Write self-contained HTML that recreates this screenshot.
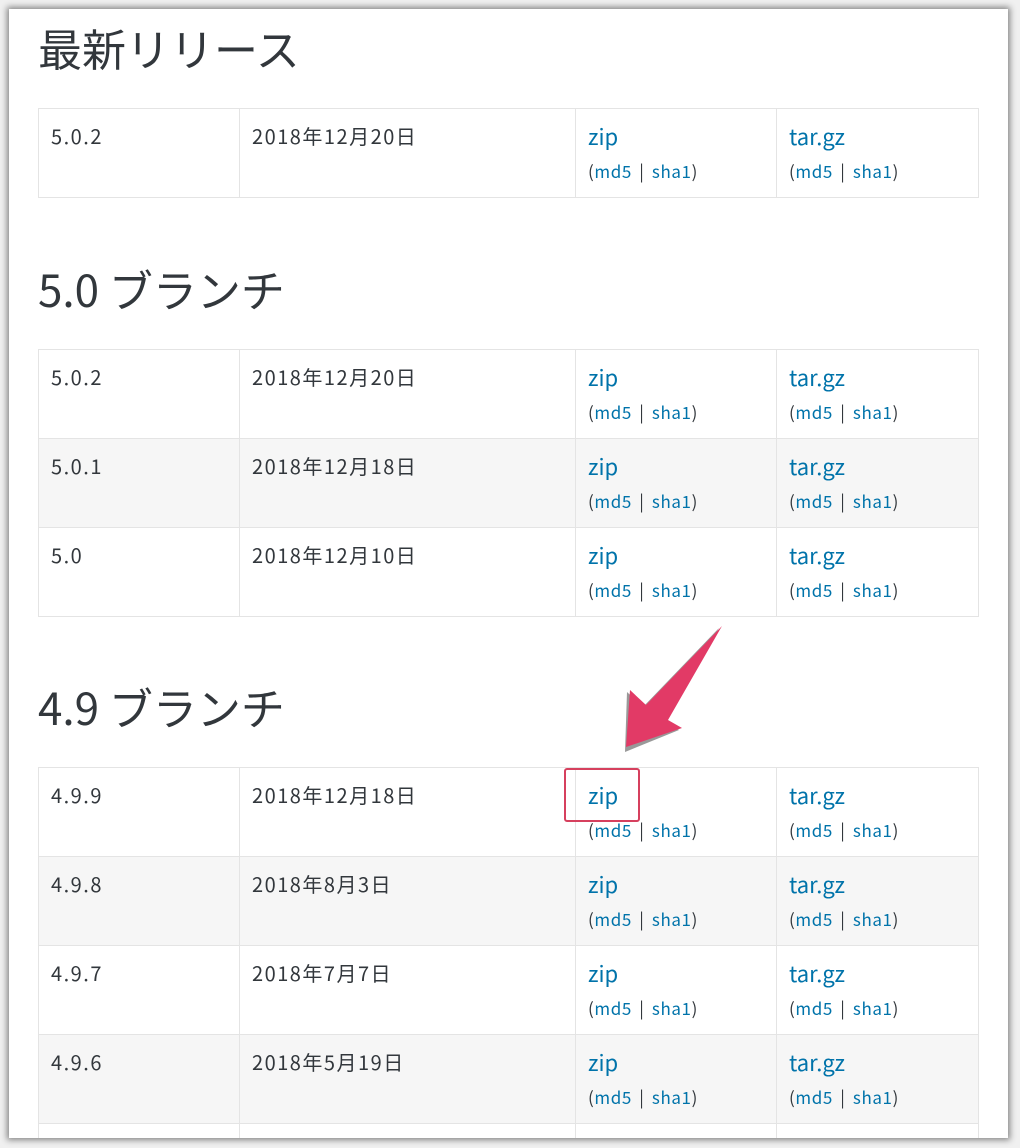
<!DOCTYPE html>
<html><head><meta charset="utf-8"><style>
body{margin:0;width:1020px;height:1148px;background:#f0f0f0;position:relative;overflow:hidden;font-family:"Liberation Sans","Noto Sans CJK JP",sans-serif;}
.panel{position:absolute;left:9px;top:9px;width:999px;height:1129px;background:#fff;box-shadow:0 0 6px 2px rgba(0,0,0,.45);overflow:hidden}
h2{position:absolute;left:29px;margin:0;font-weight:normal;font-size:44px;color:#32373c;line-height:50px;font-family:"Noto Sans CJK JP","Liberation Sans",sans-serif}
table{position:absolute;left:29px;width:941px;border-collapse:collapse;font-family:"Noto Sans CJK JP","Liberation Sans",sans-serif}
td{border:1px solid #e4e4e4;height:89px;vertical-align:top;padding:14px 12px 0;box-sizing:border-box;font-size:20px;letter-spacing:1.5px;color:#32373c;line-height:26px}
td.c3,td.c4{letter-spacing:0}
tr.g td{background:#f6f6f6}
td.c1{width:201px}td.c2{width:336px}td.c3{width:201px}
a{color:#0073aa;text-decoration:none}
.big{font-size:22px;color:#0073aa}
.sm{font-size:17px;display:block;margin-top:8px;letter-spacing:.6px;word-spacing:3px}
</style></head><body>
<div class="panel">
<h2 style="top:13px">最新リリース</h2>
<table style="top:99px"><tr><td class="c1">5.0.2</td><td class="c2">2018年12月20日</td><td class="c3"><span class="big">zip</span><span class="sm">(<a>md5</a> | <a>sha1</a>)</span></td><td class="c4"><span class="big">tar.gz</span><span class="sm">(<a>md5</a> | <a>sha1</a>)</span></td></tr></table>
<h2 style="top:254px">5.0 ブランチ</h2>
<table style="top:340px">
<tr><td class="c1">5.0.2</td><td class="c2">2018年12月20日</td><td class="c3"><span class="big">zip</span><span class="sm">(<a>md5</a> | <a>sha1</a>)</span></td><td class="c4"><span class="big">tar.gz</span><span class="sm">(<a>md5</a> | <a>sha1</a>)</span></td></tr>
<tr class="g"><td class="c1">5.0.1</td><td class="c2">2018年12月18日</td><td class="c3"><span class="big">zip</span><span class="sm">(<a>md5</a> | <a>sha1</a>)</span></td><td class="c4"><span class="big">tar.gz</span><span class="sm">(<a>md5</a> | <a>sha1</a>)</span></td></tr>
<tr><td class="c1">5.0</td><td class="c2">2018年12月10日</td><td class="c3"><span class="big">zip</span><span class="sm">(<a>md5</a> | <a>sha1</a>)</span></td><td class="c4"><span class="big">tar.gz</span><span class="sm">(<a>md5</a> | <a>sha1</a>)</span></td></tr>
</table>
<h2 style="top:672px">4.9 ブランチ</h2>
<table style="top:758px">
<tr><td class="c1">4.9.9</td><td class="c2">2018年12月18日</td><td class="c3"><span class="big">zip</span><span class="sm">(<a>md5</a> | <a>sha1</a>)</span></td><td class="c4"><span class="big">tar.gz</span><span class="sm">(<a>md5</a> | <a>sha1</a>)</span></td></tr>
<tr class="g"><td class="c1">4.9.8</td><td class="c2">2018年8月3日</td><td class="c3"><span class="big">zip</span><span class="sm">(<a>md5</a> | <a>sha1</a>)</span></td><td class="c4"><span class="big">tar.gz</span><span class="sm">(<a>md5</a> | <a>sha1</a>)</span></td></tr>
<tr><td class="c1">4.9.7</td><td class="c2">2018年7月7日</td><td class="c3"><span class="big">zip</span><span class="sm">(<a>md5</a> | <a>sha1</a>)</span></td><td class="c4"><span class="big">tar.gz</span><span class="sm">(<a>md5</a> | <a>sha1</a>)</span></td></tr>
<tr class="g"><td class="c1">4.9.6</td><td class="c2">2018年5月19日</td><td class="c3"><span class="big">zip</span><span class="sm">(<a>md5</a> | <a>sha1</a>)</span></td><td class="c4"><span class="big">tar.gz</span><span class="sm">(<a>md5</a> | <a>sha1</a>)</span></td></tr>
<tr><td class="c1"></td><td class="c2"></td><td class="c3"></td><td class="c4"></td></tr>
</table>
<div style="position:absolute;left:555px;top:759px;width:72px;height:50px;border:2px solid #d6405e;border-radius:3px"></div>
<svg style="position:absolute;left:0;top:0" width="999" height="1129"><polygon points="619,741 621,681 637,696 713,617 660,711 673,719" fill="#333" opacity=".5" transform="translate(-3,2)"/><polygon points="617,738 621,681 637,696 713,617 659,711 673,719" fill="#e23a66"/></svg>
</div>
</body></html>
